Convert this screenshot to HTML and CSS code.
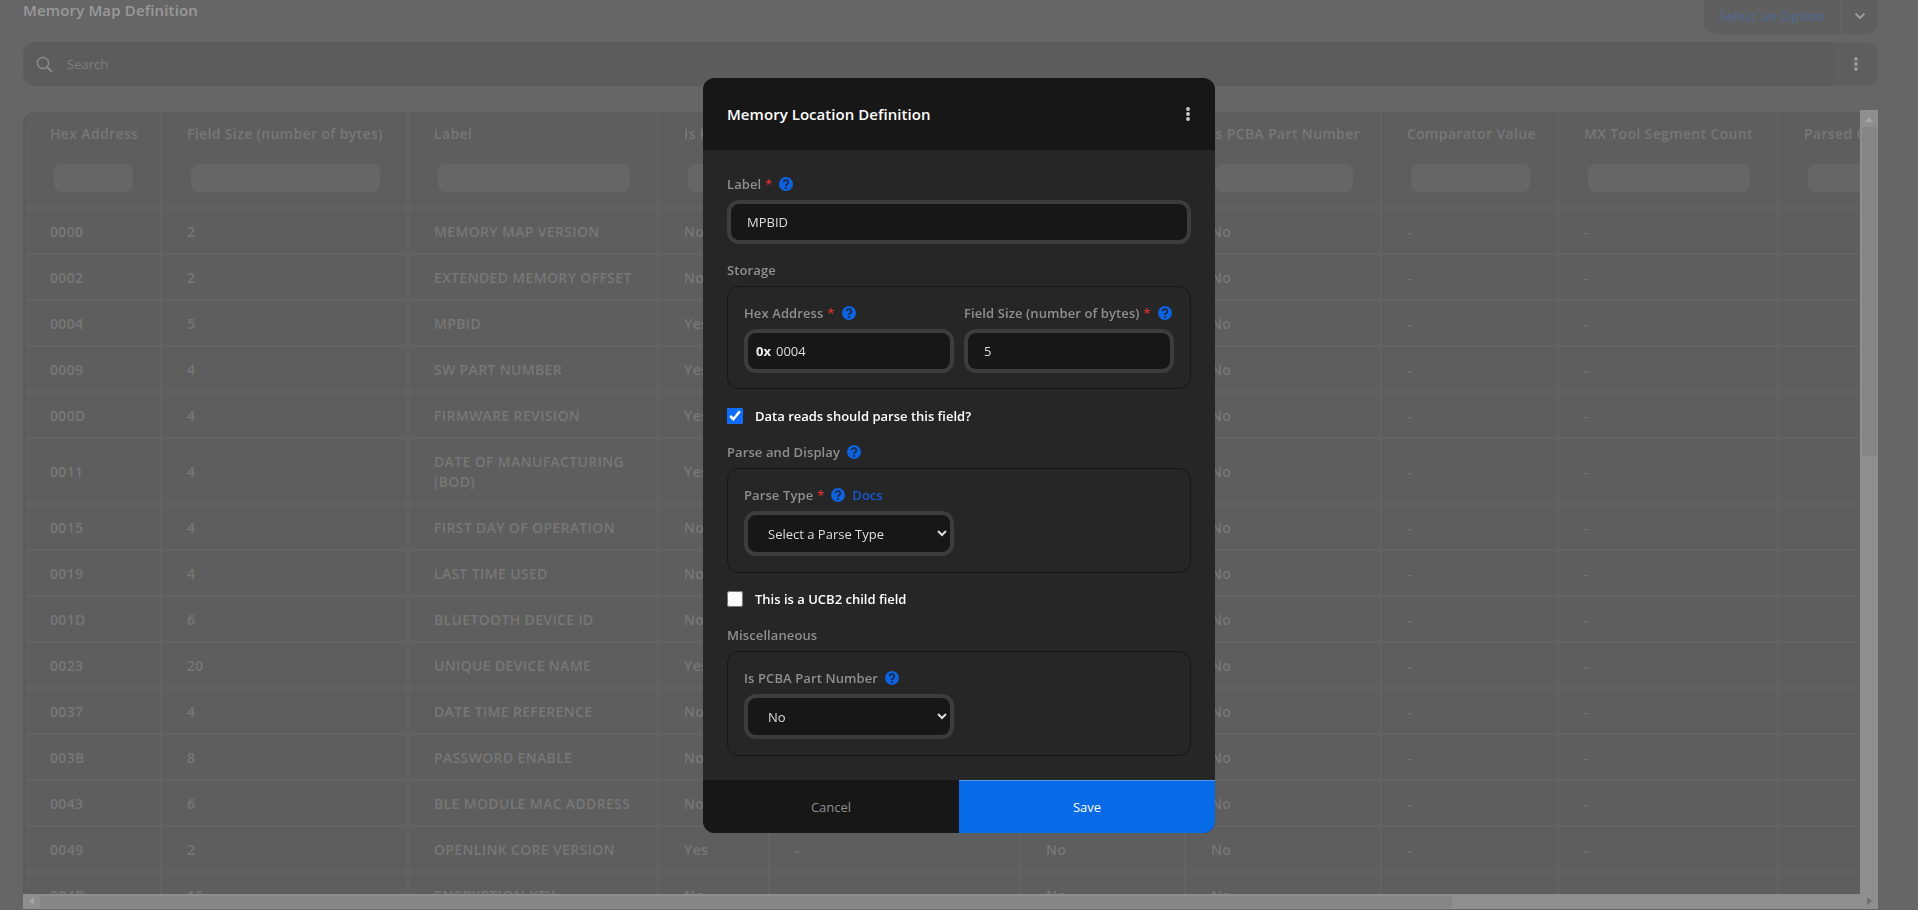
FILE: index.html
```html
<!DOCTYPE html>
<html lang="en">
<head>
  <meta charset="UTF-8" />
  <meta name="viewport" content="width=device-width, initial-scale=1.0"/>
  <title>Memory Map Definition</title>
  <link rel="stylesheet" href="styles.css">
</head>
<body>
  <svg class="icon-defs" width="0" height="0" aria-hidden="true">
    <symbol id="help" viewBox="0 0 14 14">
      <circle cx="7" cy="7" r="7" fill="#0d62e0"/>
      <path d="M4.7 5.3a2.3 2.3 0 1 1 3.5 2c-.8.5-1.2.9-1.2 1.6" fill="none" stroke="#1c2a40" stroke-width="1.7"/>
      <circle cx="7" cy="11" r="1.1" fill="#1c2a40"/>
    </symbol>
    <symbol id="kebab" viewBox="0 0 4 14">
      <circle cx="2" cy="2" r="1.9"/>
      <circle cx="2" cy="7" r="1.9"/>
      <circle cx="2" cy="12" r="1.9"/>
    </symbol>
  </svg>

  <div class="page">
    <div class="page-header">
      <h2 class="page-title">Memory Map Definition</h2>
      <div class="option-select">
        <span class="option-text">Select an Option</span>
        <span class="option-arrow">
          <svg width="12" height="8" viewBox="0 0 12 8"><path d="M1.5 1.5 6 6l4.5-4.5" fill="none" stroke="#9a9a9a" stroke-width="2"/></svg>
        </span>
      </div>
    </div>

    <div class="search-bar">
      <svg class="search-icon" width="17" height="17" viewBox="0 0 17 17"><circle cx="7" cy="7" r="5.6" fill="none" stroke="#8a8a8a" stroke-width="1.5"/><path d="M11 11l5 5" stroke="#8a8a8a" stroke-width="1.8"/></svg>
      <span class="search-text">Search</span>
      <span class="search-menu"><svg class="kebab-dim" width="4" height="16"><use href="#kebab"/></svg></span>
    </div>

    <div class="table-frame">
      <div class="table-view">
        <table class="map-table">
          <colgroup>
            <col class="c1"><col class="c2"><col class="c3"><col class="c4"><col class="c5">
            <col class="c6"><col class="c7"><col class="c8"><col class="c9"><col class="c10">
          </colgroup>
          <thead>
            <tr>
              <th>Hex Address<span class="filter"></span></th>
              <th>Field Size (number of bytes)<span class="filter"></span></th>
              <th>Label<span class="filter"></span></th>
              <th>Is Required<span class="filter"></span></th>
              <th>Parse Type<span class="filter"></span></th>
              <th>Is UCB2 Child<span class="filter"></span></th>
              <th>Is PCBA Part Number<span class="filter"></span></th>
              <th>Comparator Value<span class="filter"></span></th>
              <th>MX Tool Segment Count<span class="filter"></span></th>
              <th>Parsed Output<span class="filter"></span></th>
            </tr>
          </thead>
          <tbody>
            <tr><td>0000</td><td>2</td><td>MEMORY MAP VERSION</td><td>No</td><td>-</td><td>No</td><td>No</td><td>-</td><td>-</td><td></td></tr>
            <tr><td>0002</td><td>2</td><td>EXTENDED MEMORY OFFSET</td><td>No</td><td>-</td><td>No</td><td>No</td><td>-</td><td>-</td><td></td></tr>
            <tr><td>0004</td><td>5</td><td>MPBID</td><td>Yes</td><td>-</td><td>No</td><td>No</td><td>-</td><td>-</td><td></td></tr>
            <tr><td>0009</td><td>4</td><td>SW PART NUMBER</td><td>Yes</td><td>-</td><td>No</td><td>No</td><td>-</td><td>-</td><td></td></tr>
            <tr><td>000D</td><td>4</td><td>FIRMWARE REVISION</td><td>Yes</td><td>-</td><td>No</td><td>No</td><td>-</td><td>-</td><td></td></tr>
            <tr class="tall"><td>0011</td><td>4</td><td>DATE OF MANUFACTURING (BOD)</td><td>Yes</td><td>-</td><td>No</td><td>No</td><td>-</td><td>-</td><td></td></tr>
            <tr><td>0015</td><td>4</td><td>FIRST DAY OF OPERATION</td><td>No</td><td>-</td><td>No</td><td>No</td><td>-</td><td>-</td><td></td></tr>
            <tr><td>0019</td><td>4</td><td>LAST TIME USED</td><td>No</td><td>-</td><td>No</td><td>No</td><td>-</td><td>-</td><td></td></tr>
            <tr><td>001D</td><td>6</td><td>BLUETOOTH DEVICE ID</td><td>No</td><td>-</td><td>No</td><td>No</td><td>-</td><td>-</td><td></td></tr>
            <tr><td>0023</td><td>20</td><td>UNIQUE DEVICE NAME</td><td>Yes</td><td>-</td><td>No</td><td>No</td><td>-</td><td>-</td><td></td></tr>
            <tr><td>0037</td><td>4</td><td>DATE TIME REFERENCE</td><td>No</td><td>-</td><td>No</td><td>No</td><td>-</td><td>-</td><td></td></tr>
            <tr><td>003B</td><td>8</td><td>PASSWORD ENABLE</td><td>No</td><td>-</td><td>No</td><td>No</td><td>-</td><td>-</td><td></td></tr>
            <tr><td>0043</td><td>6</td><td>BLE MODULE MAC ADDRESS</td><td>No</td><td>-</td><td>No</td><td>No</td><td>-</td><td>-</td><td></td></tr>
            <tr><td>0049</td><td>2</td><td>OPENLINK CORE VERSION</td><td>Yes</td><td>-</td><td>No</td><td>No</td><td>-</td><td>-</td><td></td></tr>
            <tr><td>004B</td><td>16</td><td>ENCRYPTION KEY</td><td>No</td><td>-</td><td>No</td><td>No</td><td>-</td><td>-</td><td></td></tr>
          </tbody>
        </table>
      </div>
      <div class="scroll-y">
        <span class="arrow-up"></span>
        <span class="thumb-y"></span>
      </div>
      <div class="scroll-x">
        <span class="arrow-left"></span>
        <span class="thumb-x"></span>
        <span class="arrow-right"></span>
      </div>
    </div>
  </div>

  <!-- Edit dialog -->
  <div class="modal-wrap">
    <div class="modal">
      <div class="modal-header">
        <h3 class="modal-title">Memory Location Definition</h3>
        <svg class="kebab-light" width="4" height="14"><use href="#kebab"/></svg>
      </div>

      <div class="modal-body">
        <div class="label-row">
          <label class="form-label" for="label-input">Label</label><span class="req">*</span>
          <svg class="help" width="14" height="14"><use href="#help"/></svg>
        </div>
        <input class="form-input" id="label-input" type="text" value="MPBID">

        <div class="label-row section-label"><span class="form-label">Storage</span></div>
        <div class="group group-short">
          <div class="group-grid">
            <div>
              <div class="label-row">
                <label class="form-label" for="hex-input">Hex Address</label><span class="req">*</span>
                <svg class="help" width="14" height="14"><use href="#help"/></svg>
              </div>
              <div class="hex-input">
                <span class="hex-prefix">0x</span>
                <input id="hex-input" type="text" value="0004">
              </div>
            </div>
            <div>
              <div class="label-row">
                <label class="form-label" for="size-input">Field Size (number of bytes)</label><span class="req">*</span>
                <svg class="help" width="14" height="14"><use href="#help"/></svg>
              </div>
              <input class="form-input" id="size-input" type="text" value="5">
            </div>
          </div>
        </div>

        <label class="check-row">
          <input type="checkbox" checked>
          <span>Data reads should parse this field?</span>
        </label>

        <div class="label-row section-label after-check">
          <span class="form-label">Parse and Display</span>
          <svg class="help" width="14" height="14"><use href="#help"/></svg>
        </div>
        <div class="group">
          <div class="label-row">
            <label class="form-label" for="parse-type">Parse Type</label><span class="req">*</span>
            <svg class="help" width="14" height="14"><use href="#help"/></svg>
            <a class="docs-link" href="#">Docs</a>
          </div>
          <select class="form-select" id="parse-type">
            <option>Select a Parse Type</option>
          </select>
        </div>

        <label class="check-row check-second">
          <input type="checkbox">
          <span>This is a UCB2 child field</span>
        </label>

        <div class="label-row section-label after-check"><span class="form-label">Miscellaneous</span></div>
        <div class="group">
          <div class="label-row">
            <label class="form-label" for="pcba-select">Is PCBA Part Number</label>
            <svg class="help" width="14" height="14"><use href="#help"/></svg>
          </div>
          <select class="form-select" id="pcba-select">
            <option>No</option>
          </select>
        </div>
      </div>

      <div class="modal-footer">
        <button class="btn-cancel">Cancel</button>
        <button class="btn-save">Save</button>
      </div>
    </div>
  </div>
</body>
</html>
```

FILE: styles.css
```css
* {
  margin: 0;
  padding: 0;
  box-sizing: border-box;
}

body {
  font-family: "Open Sans", "Noto Sans", sans-serif;
  background-color: #666;
  height: 910px;
  overflow: hidden;
}

.icon-defs {
  position: absolute;
}

.page {
  padding: 0 40px 0 23px;
}

.page-header {
  display: flex;
  justify-content: space-between;
  height: 34px;
  margin-bottom: 8px;
}

.page-title {
  font-size: 15px;
  font-weight: 600;
  line-height: 21px;
  letter-spacing: 0.15px;
  color: #999;
}

.option-select {
  display: flex;
  width: 174px;
  background: #5f5f5f;
  border-radius: 0 0 12px 12px;
}

.option-text {
  width: 137px;
  padding-left: 15px;
  font-size: 13px;
  line-height: 32px;
  letter-spacing: 0.4px;
  white-space: nowrap;
  color: #4d6a9c;
  border-right: 1px solid #666;
}

.option-arrow {
  flex: 1;
  display: flex;
  align-items: center;
  justify-content: center;
  padding-bottom: 2px;
}

.search-bar {
  display: flex;
  align-items: center;
  height: 44px;
  margin-bottom: 24px;
  background: #5c5c5c;
  border-radius: 12px;
}

.search-icon {
  margin-left: 13px;
}

.search-text {
  flex: 1;
  margin-left: 14px;
  font-size: 13px;
  color: #7d7d7d;
}

.search-menu {
  width: 44px;
  height: 44px;
  display: flex;
  align-items: center;
  justify-content: center;
  background: #5f5f5f;
  border-radius: 0 12px 12px 0;
}

.kebab-dim {
  fill: #9a9a9a;
}

/* Table with its scroll bars */
.table-frame {
  display: grid;
  grid-template-columns: 1fr 18px;
  grid-template-rows: 784px 15px;
}

.table-view {
  overflow: hidden;
  padding-top: 2px;
}

.map-table {
  table-layout: fixed;
  width: 1952px;
  border-collapse: separate;
  border-spacing: 0;
  background: #5e5e5e;
  border-left: 2px solid #5a5a5a;
  border-top-left-radius: 12px;
  font-size: 14px;
  font-weight: 600;
  letter-spacing: 0.35px;
  color: #777;
}

.c1 { width: 137px; }
.c2 { width: 247px; }
.c3 { width: 250px; }
.c4 { width: 111px; }
.c5 { width: 251px; }
.c6 { width: 165px; }
.c7 { width: 196px; }
.c8 { width: 177px; }
.c9 { width: 220px; }
.c10 { width: 198px; }

.map-table th,
.map-table td {
  padding: 0 20px 0 25px;
  text-align: left;
  border-right: 2px solid #636363;
  border-bottom: 2px solid #636363;
  vertical-align: middle;
}

.map-table th {
  height: 97px;
  padding-top: 12px;
  padding-right: 25px;
  line-height: 20px;
  vertical-align: top;
  font-weight: 600;
  white-space: nowrap;
}

.map-table td {
  height: 46px;
  padding-top: 1px;
  line-height: 20px;
}

.map-table .tall td {
  height: 66px;
}

.filter {
  display: block;
  height: 28px;
  margin: 20px 2px 0 4px;
  background: #666;
  border-radius: 8px;
}

.scroll-y {
  background: #8f8f8f;
  position: relative;
}

.thumb-y {
  position: absolute;
  top: 17px;
  left: 2px;
  right: 1px;
  height: 329px;
  background: #858585;
}

.arrow-up {
  position: absolute;
  top: 7px;
  left: 5px;
  border: 4px solid transparent;
  border-top: 0;
  border-bottom: 5px solid #a5a5a5;
}

.scroll-x {
  grid-column: 1 / 3;
  background: #8f8f8f;
  position: relative;
}

.thumb-x {
  position: absolute;
  top: 2px;
  bottom: 1px;
  left: 17px;
  width: 1412px;
  background: #858585;
}

.arrow-left {
  position: absolute;
  top: 3px;
  left: 6px;
  border: 4px solid transparent;
  border-left: 0;
  border-right: 5px solid #a5a5a5;
}

.arrow-right {
  position: absolute;
  top: 3px;
  right: 6px;
  border: 4px solid transparent;
  border-right: 0;
  border-left: 5px solid #6f6f6f;
}

/* Dialog */
.modal-wrap {
  position: fixed;
  top: 78px;
  left: 0;
  width: 100%;
  display: flex;
  justify-content: center;
}

.modal {
  width: 512px;
  height: 755px;
  display: flex;
  flex-direction: column;
  background: #262626;
  border-radius: 12px;
  overflow: hidden;
  color-scheme: dark;
}

.modal-header {
  height: 72px;
  flex: none;
  display: flex;
  align-items: center;
  justify-content: space-between;
  padding: 0 25px 0 24px;
  background: #171717;
}

.modal-title {
  font-size: 15px;
  font-weight: 600;
  letter-spacing: 0.05px;
  color: #fff;
}

.kebab-light {
  fill: #ccc;
}

.modal-body {
  flex: 1;
  padding: 24px 24px 0;
}

.label-row {
  display: flex;
  align-items: center;
  height: 20px;
  margin-bottom: 6px;
}

.form-label {
  font-size: 13px;
  font-weight: 600;
  letter-spacing: 0.1px;
  color: #8f8f8f;
}

.req {
  margin-left: 4px;
  font-size: 13px;
  font-weight: 600;
  color: #d9322e;
}

.help {
  margin-left: 7px;
}

.docs-link {
  margin-left: 7px;
  font-size: 13px;
  font-weight: 600;
  color: #1259d6;
  text-decoration: none;
}

.form-input,
.form-select,
.hex-input {
  width: 100%;
  height: 44px;
  background: #171717;
  border: 4px solid #3d3d3d;
  border-radius: 12px;
  font-family: inherit;
  font-size: 13px;
  color: #ddd;
  outline: none;
}

.form-input {
  padding: 0 16px;
}

.hex-input {
  display: flex;
  align-items: center;
  padding-left: 8px;
}

.hex-prefix {
  font-weight: 700;
  color: #eee;
}

.hex-input input {
  flex: 1;
  min-width: 0;
  margin-left: 5px;
  background: none;
  border: none;
  outline: none;
  font-family: inherit;
  font-size: 13px;
  color: #ddd;
}

.form-select {
  display: block;
  width: 210px;
  height: 45px;
  padding: 0 6px 0 16px;
}

.section-label {
  margin-top: 16px;
}

.group {
  padding: 16px;
  border: 1px solid #171717;
  border-radius: 12px;
}

.group-short {
  padding-bottom: 15px;
}

.group-grid {
  display: grid;
  grid-template-columns: 210px 210px;
  gap: 10px;
}

.check-row {
  display: flex;
  align-items: center;
  gap: 12px;
  margin-top: 19px;
  height: 16px;
  font-size: 13px;
  font-weight: 600;
  color: #fff;
}

.check-row input {
  width: 16px;
  height: 16px;
  accent-color: #0d6efd;
  color-scheme: light;
}

.check-second {
  margin-top: 18px;
}

.after-check {
  margin-top: 18px;
}

.modal-footer {
  height: 53px;
  flex: none;
  display: flex;
}

.modal-footer button {
  flex: 1;
  border: none;
  font-family: inherit;
  font-size: 13px;
  cursor: pointer;
}

.btn-cancel {
  background: #171717;
  color: #8f8f8f;
}

.btn-save {
  background: #076be8;
  border-top: 1px solid #5a9af0 !important;
  color: #fff;
}
```
